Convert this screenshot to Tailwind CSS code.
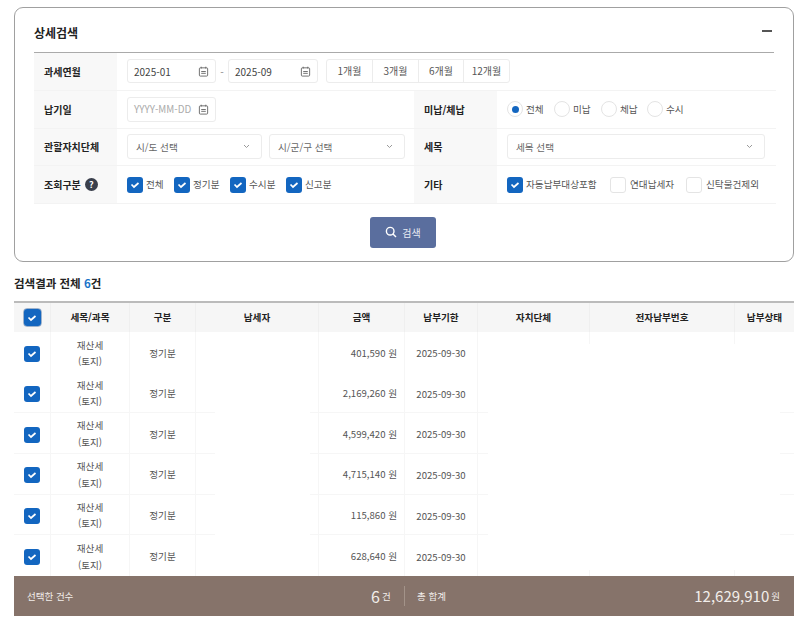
<!DOCTYPE html>
<html lang="ko">
<head>
<meta charset="utf-8">
<script src="https://cdn.jsdelivr.net/npm/@tailwindcss/browser@4"></script>
</head>
<body class="bg-white">
<div class="w-[800px] h-[626px] overflow-hidden pl-[14px] pr-[6px] pt-[7px] font-['Noto_Sans_CJK_KR','Noto_Sans',sans-serif] text-[9.6px] text-[#444]">

  <section class="h-[255px] border border-[#a0a0a0] rounded-[9px] px-[19px]">
    <div class="h-[44px] flex items-center justify-between pt-[6px]">
      <h2 class="text-[12px] font-bold text-[#222]">상세검색</h2>
      <span class="w-[10px] h-[1.5px] bg-[#555] mr-[2px] -mt-[4px]"></span>
    </div>
    <div class="grid grid-cols-[83px_297px_83px_279px] auto-rows-[37.75px] border-t border-[#aaa]">
      <div class="bg-[#f8f8f8] border-b border-[#f3f3f3] flex items-center pl-[10px] font-bold text-[#222] text-[10px]">과세연월</div>
      <div class="col-span-3 border-b border-[#f3f3f3] flex items-center pl-[10px] text-[10px]">
        <div class="w-[89px] h-[24px] border border-[#ececec] rounded-[3px] flex items-center justify-between pl-[6px] pr-[6px] text-[#444]">2025-01
          <svg class="w-[11px] h-[11px]" viewBox="0 0 12 12" fill="none" stroke="#666" stroke-width="1"><rect x="1.5" y="2" width="9" height="9" rx="1"/><path d="M3.5 .8v2M8.5 .8v2M3.5 6h5M3.5 8h5"/></svg>
        </div>
        <span class="w-[12px] text-center text-[#888]">-</span>
        <div class="w-[90px] h-[24px] border border-[#ececec] rounded-[3px] flex items-center justify-between pl-[6px] pr-[6px] text-[#444]">2025-09
          <svg class="w-[11px] h-[11px]" viewBox="0 0 12 12" fill="none" stroke="#666" stroke-width="1"><rect x="1.5" y="2" width="9" height="9" rx="1"/><path d="M3.5 .8v2M8.5 .8v2M3.5 6h5M3.5 8h5"/></svg>
        </div>
        <div class="ml-[8px] h-[24px] w-[184px] border border-[#ececec] rounded-[3px] grid grid-cols-[46px_46px_45px_1fr] text-center leading-[22px] text-[#555]">
          <span class="border-r border-[#ececec]">1개월</span>
          <span class="border-r border-[#ececec]">3개월</span>
          <span class="border-r border-[#ececec]">6개월</span>
          <span>12개월</span>
        </div>
      </div>

      <div class="bg-[#f8f8f8] border-b border-[#f3f3f3] flex items-center pl-[10px] pt-px font-bold text-[#222] text-[10px]">납기일</div>
      <div class="border-b border-[#f3f3f3] flex items-center pl-[10px]">
        <div class="w-[89px] h-[25px] border border-[#ececec] rounded-[3px] flex items-center justify-between pl-[6px] pr-[6px] text-[#aaa] text-[9.85px]">YYYY-MM-DD
          <svg class="w-[11px] h-[11px]" viewBox="0 0 12 12" fill="none" stroke="#666" stroke-width="1"><rect x="1.5" y="2" width="9" height="9" rx="1"/><path d="M3.5 .8v2M8.5 .8v2M3.5 6h5M3.5 8h5"/></svg>
        </div>
      </div>
      <div class="bg-[#f8f8f8] border-b border-[#f3f3f3] flex items-center pl-[10px] pt-px font-bold text-[#222] text-[10px]">미납/체납</div>
      <div class="border-b border-[#f3f3f3] flex items-center pl-[10px] text-[#555]">
        <span class="w-[16px] h-[16px] rounded-full border border-[#e4e4e4] flex items-center justify-center"><span class="w-[7px] h-[7px] rounded-full bg-[#1366c0]"></span></span>
        <span class="ml-[3px] w-[28px]">전체</span>
        <span class="w-[16px] h-[16px] rounded-full border border-[#e4e4e4]"></span>
        <span class="ml-[3px] w-[28px]">미납</span>
        <span class="w-[16px] h-[16px] rounded-full border border-[#e4e4e4]"></span>
        <span class="ml-[3px] w-[27px]">체납</span>
        <span class="w-[16px] h-[16px] rounded-full border border-[#e4e4e4]"></span>
        <span class="ml-[3px]">수시</span>
      </div>

      <div class="bg-[#f8f8f8] border-b border-[#f3f3f3] flex items-center pl-[10px] font-bold text-[#222] text-[10px]">관할자치단체</div>
      <div class="border-b border-[#f3f3f3] flex items-center pl-[10px] gap-[7px]">
        <div class="w-[135px] h-[25px] border border-[#ececec] rounded-[3px] flex items-center justify-between pl-[8px] pr-[11px] text-[#666]">시/도 선택
          <svg class="w-[7px] h-[5px]" viewBox="0 0 7 5" fill="none" stroke="#999" stroke-width="1"><path d="M1 1l2.5 2.5L6 1"/></svg>
        </div>
        <div class="w-[136px] h-[25px] border border-[#ececec] rounded-[3px] flex items-center justify-between pl-[8px] pr-[11px] text-[#666]">시/군/구 선택
          <svg class="w-[7px] h-[5px]" viewBox="0 0 7 5" fill="none" stroke="#999" stroke-width="1"><path d="M1 1l2.5 2.5L6 1"/></svg>
        </div>
      </div>
      <div class="bg-[#f8f8f8] border-b border-[#f3f3f3] flex items-center pl-[10px] font-bold text-[#222] text-[10px]">세목</div>
      <div class="border-b border-[#f3f3f3] flex items-center pl-[10px]">
        <div class="w-[258px] h-[25px] border border-[#ececec] rounded-[3px] flex items-center justify-between pl-[8px] pr-[11px] text-[#666]">세목 선택
          <svg class="w-[7px] h-[5px]" viewBox="0 0 7 5" fill="none" stroke="#999" stroke-width="1"><path d="M1 1l2.5 2.5L6 1"/></svg>
        </div>
      </div>

      <div class="bg-[#f8f8f8] border-b border-[#f3f3f3] flex items-center pl-[10px] font-bold text-[#222] text-[10px] gap-[4px]">조회구분
        <span class="w-[13px] h-[13px] rounded-full bg-[#3a3f4c] text-white text-[9px] flex items-center justify-center leading-none">?</span>
      </div>
      <div class="border-b border-[#f3f3f3] flex items-center pl-[10px] text-[#555]">
        <span class="w-[16px] h-[16px] rounded-[3px] bg-[#1366c0] flex items-center justify-center"><svg class="w-[10px] h-[8px]" viewBox="0 0 10 8" fill="none" stroke="#fff" stroke-width="1.7"><path d="M1.5 3.5L4 6l4.5-4"/></svg></span>
        <span class="ml-[3px] w-[28px]">전체</span>
        <span class="w-[16px] h-[16px] rounded-[3px] bg-[#1366c0] flex items-center justify-center"><svg class="w-[10px] h-[8px]" viewBox="0 0 10 8" fill="none" stroke="#fff" stroke-width="1.7"><path d="M1.5 3.5L4 6l4.5-4"/></svg></span>
        <span class="ml-[3px] w-[37px]">정기분</span>
        <span class="w-[16px] h-[16px] rounded-[3px] bg-[#1366c0] flex items-center justify-center"><svg class="w-[10px] h-[8px]" viewBox="0 0 10 8" fill="none" stroke="#fff" stroke-width="1.7"><path d="M1.5 3.5L4 6l4.5-4"/></svg></span>
        <span class="ml-[3px] w-[37px]">수시분</span>
        <span class="w-[16px] h-[16px] rounded-[3px] bg-[#1366c0] flex items-center justify-center"><svg class="w-[10px] h-[8px]" viewBox="0 0 10 8" fill="none" stroke="#fff" stroke-width="1.7"><path d="M1.5 3.5L4 6l4.5-4"/></svg></span>
        <span class="ml-[3px]">신고분</span>
      </div>
      <div class="bg-[#f8f8f8] border-b border-[#f3f3f3] flex items-center pl-[10px] font-bold text-[#222] text-[10px]">기타</div>
      <div class="border-b border-[#f3f3f3] flex items-center pl-[10px] text-[#555]">
        <span class="w-[16px] h-[16px] rounded-[3px] bg-[#1366c0] flex items-center justify-center"><svg class="w-[10px] h-[8px]" viewBox="0 0 10 8" fill="none" stroke="#fff" stroke-width="1.7"><path d="M1.5 3.5L4 6l4.5-4"/></svg></span>
        <span class="ml-[3px] w-[84px]">자동납부대상포함</span>
        <span class="w-[16px] h-[16px] rounded-[3px] border border-[#e4e4e4]"></span>
        <span class="ml-[4px] w-[56px]">연대납세자</span>
        <span class="w-[16px] h-[16px] rounded-[3px] border border-[#e4e4e4]"></span>
        <span class="ml-[4px]">신탁물건제외</span>
      </div>
    </div>
    <div class="flex justify-center pt-[13px] pr-[2px]">
      <button class="w-[66px] h-[31px] rounded-[3px] bg-[#5a6e9e] text-[#e8ebf3] text-[10px] flex items-center justify-center gap-[5px] pb-px">
        <svg class="w-[12px] h-[12px]" viewBox="0 0 12 12" fill="none" stroke="#fff" stroke-width="1.4"><circle cx="5.2" cy="5.2" r="3.8"/><path d="M8 8l3 3"/></svg>검색
      </button>
    </div>
  </section>

  <h3 class="mt-[12px] h-[18px] leading-[18px] text-[11.5px] font-bold text-[#222]">검색결과 전체 <span class="text-[#1a73c8]">6</span>건</h3>

  <div class="relative mt-[9px]">
    <div class="grid grid-cols-[37px_79px_66px_123px_86px_73px_112px_145px_59px] h-[31px] border-t-2 border-[#bbb] bg-[#f6f6f6] font-bold text-[#222] text-center items-stretch">
      <div class="border-r border-[#efefef] flex items-center justify-center"><span class="w-[17px] h-[17px] rounded-[3px] bg-[#1366c0] outline outline-[#1f4f8f]/40 flex items-center justify-center"><svg class="w-[10px] h-[8px]" viewBox="0 0 10 8" fill="none" stroke="#fff" stroke-width="1.7"><path d="M1.5 3.5L4 6l4.5-4"/></svg></span></div>
      <div class="border-r border-[#efefef] flex items-center justify-center">세목/과목</div>
      <div class="border-r border-[#efefef] flex items-center justify-center">구분</div>
      <div class="border-r border-[#efefef] flex items-center justify-center">납세자</div>
      <div class="border-r border-[#efefef] flex items-center justify-center">금액</div>
      <div class="border-r border-[#efefef] flex items-center justify-center">납부기한</div>
      <div class="border-r border-[#efefef] flex items-center justify-center">자치단체</div>
      <div class="border-r border-[#efefef] flex items-center justify-center">전자납부번호</div>
      <div class="flex items-center justify-center">납부상태</div>
    </div>

    <div class="grid grid-cols-[37px_79px_66px_123px_86px_73px_112px_145px_59px] auto-rows-[40.67px] text-[#555] text-center leading-[16.7px]">
      <div class="border-r border-[#f6f6f6] flex items-center justify-center pt-[3px]"><span class="w-[16px] h-[16px] rounded-[3px] bg-[#1366c0] flex items-center justify-center"><svg class="w-[10px] h-[8px]" viewBox="0 0 10 8" fill="none" stroke="#fff" stroke-width="1.7"><path d="M1.5 3.5L4 6l4.5-4"/></svg></span></div>
      <div class="border-r border-[#f6f6f6] flex items-center justify-center pt-[2px]">재산세<br>(토지)</div>
      <div class="border-r border-[#f6f6f6] flex items-center justify-center pt-[2px]">정기분</div>
      <div class="border-r border-[#f6f6f6]"></div>
      <div class="border-r border-[#f6f6f6] flex items-center justify-end pr-[7px] pt-[2px]">401,590 원</div>
      <div class="border-r border-[#f6f6f6] flex items-center justify-center pt-[3px]">2025-09-30</div>
      <div class="border-r border-[#f6f6f6]"></div>
      <div class="border-r border-[#f6f6f6]"></div>
      <div></div>

      <div class="border-r border-b border-[#f6f6f6] flex items-center justify-center pt-[3px]"><span class="w-[16px] h-[16px] rounded-[3px] bg-[#1366c0] flex items-center justify-center"><svg class="w-[10px] h-[8px]" viewBox="0 0 10 8" fill="none" stroke="#fff" stroke-width="1.7"><path d="M1.5 3.5L4 6l4.5-4"/></svg></span></div>
      <div class="border-r border-b border-[#f6f6f6] flex items-center justify-center pt-[2px]">재산세<br>(토지)</div>
      <div class="border-r border-b border-[#f6f6f6] flex items-center justify-center pt-[2px]">정기분</div>
      <div class="border-r border-b border-[#f6f6f6]"></div>
      <div class="border-r border-b border-[#f6f6f6] flex items-center justify-end pr-[7px] pt-[2px]">2,169,260 원</div>
      <div class="border-r border-b border-[#f6f6f6] flex items-center justify-center pt-[3px]">2025-09-30</div>
      <div class="border-r border-b border-[#f6f6f6]"></div>
      <div class="border-r border-b border-[#f6f6f6]"></div>
      <div class="border-b border-[#f6f6f6]"></div>

      <div class="border-r border-b border-[#f6f6f6] flex items-center justify-center pt-[3px]"><span class="w-[16px] h-[16px] rounded-[3px] bg-[#1366c0] flex items-center justify-center"><svg class="w-[10px] h-[8px]" viewBox="0 0 10 8" fill="none" stroke="#fff" stroke-width="1.7"><path d="M1.5 3.5L4 6l4.5-4"/></svg></span></div>
      <div class="border-r border-b border-[#f6f6f6] flex items-center justify-center pt-[2px]">재산세<br>(토지)</div>
      <div class="border-r border-b border-[#f6f6f6] flex items-center justify-center pt-[2px]">정기분</div>
      <div class="border-r border-b border-[#f6f6f6]"></div>
      <div class="border-r border-b border-[#f6f6f6] flex items-center justify-end pr-[7px] pt-[2px]">4,599,420 원</div>
      <div class="border-r border-b border-[#f6f6f6] flex items-center justify-center pt-[3px]">2025-09-30</div>
      <div class="border-r border-b border-[#f6f6f6]"></div>
      <div class="border-r border-b border-[#f6f6f6]"></div>
      <div class="border-b border-[#f6f6f6]"></div>

      <div class="border-r border-b border-[#f6f6f6] flex items-center justify-center pt-[3px]"><span class="w-[16px] h-[16px] rounded-[3px] bg-[#1366c0] flex items-center justify-center"><svg class="w-[10px] h-[8px]" viewBox="0 0 10 8" fill="none" stroke="#fff" stroke-width="1.7"><path d="M1.5 3.5L4 6l4.5-4"/></svg></span></div>
      <div class="border-r border-b border-[#f6f6f6] flex items-center justify-center pt-[2px]">재산세<br>(토지)</div>
      <div class="border-r border-b border-[#f6f6f6] flex items-center justify-center pt-[2px]">정기분</div>
      <div class="border-r border-b border-[#f6f6f6]"></div>
      <div class="border-r border-b border-[#f6f6f6] flex items-center justify-end pr-[7px] pt-[2px]">4,715,140 원</div>
      <div class="border-r border-b border-[#f6f6f6] flex items-center justify-center pt-[3px]">2025-09-30</div>
      <div class="border-r border-b border-[#f6f6f6]"></div>
      <div class="border-r border-b border-[#f6f6f6]"></div>
      <div class="border-b border-[#f6f6f6]"></div>

      <div class="border-r border-b border-[#f6f6f6] flex items-center justify-center pt-[3px]"><span class="w-[16px] h-[16px] rounded-[3px] bg-[#1366c0] flex items-center justify-center"><svg class="w-[10px] h-[8px]" viewBox="0 0 10 8" fill="none" stroke="#fff" stroke-width="1.7"><path d="M1.5 3.5L4 6l4.5-4"/></svg></span></div>
      <div class="border-r border-b border-[#f6f6f6] flex items-center justify-center pt-[2px]">재산세<br>(토지)</div>
      <div class="border-r border-b border-[#f6f6f6] flex items-center justify-center pt-[2px]">정기분</div>
      <div class="border-r border-b border-[#f6f6f6]"></div>
      <div class="border-r border-b border-[#f6f6f6] flex items-center justify-end pr-[7px] pt-[2px]">115,860 원</div>
      <div class="border-r border-b border-[#f6f6f6] flex items-center justify-center pt-[3px]">2025-09-30</div>
      <div class="border-r border-b border-[#f6f6f6]"></div>
      <div class="border-r border-b border-[#f6f6f6]"></div>
      <div class="border-b border-[#f6f6f6]"></div>

      <div class="border-r border-[#f6f6f6] flex items-center justify-center pt-[3px]"><span class="w-[16px] h-[16px] rounded-[3px] bg-[#1366c0] flex items-center justify-center"><svg class="w-[10px] h-[8px]" viewBox="0 0 10 8" fill="none" stroke="#fff" stroke-width="1.7"><path d="M1.5 3.5L4 6l4.5-4"/></svg></span></div>
      <div class="border-r border-[#f6f6f6] flex items-center justify-center pt-[2px]">재산세<br>(토지)</div>
      <div class="border-r border-[#f6f6f6] flex items-center justify-center pt-[2px]">정기분</div>
      <div class="border-r border-[#f6f6f6]"></div>
      <div class="border-r border-[#f6f6f6] flex items-center justify-end pr-[7px] pt-[2px]">628,640 원</div>
      <div class="border-r border-[#f6f6f6] flex items-center justify-center pt-[3px]">2025-09-30</div>
      <div class="border-r border-[#f6f6f6]"></div>
      <div class="border-r border-[#f6f6f6]"></div>
      <div></div>
    </div>

    <!-- redaction blocks that cover cell lines in the source picture -->
    <div class="absolute left-[201px] top-[31px] w-[95px] h-[244px] bg-white"></div>
    <div class="absolute left-[474px] top-[43px] w-[292px] h-[226px] bg-white"></div>

    <div class="h-[40px] bg-[#86736a] text-[#f2eeeb] flex items-center">
      <span class="pl-[13px] w-[328px] text-[9.5px]">선택한 건수</span>
      <span class="w-[38px] text-right text-[16px] leading-none">6</span>
      <span class="ml-[2px] w-[9px] text-[9.5px]">건</span>
      <span class="ml-[13px] w-px h-[20px] bg-[#a39389]"></span>
      <span class="ml-[12px] text-[9.5px]">총 합계</span>
      <span class="ml-auto text-[15px] leading-none">12,629,910</span>
      <span class="ml-[2px] mr-[14px] text-[9.5px]">원</span>
    </div>
  </div>
</div>
</body>
</html>
